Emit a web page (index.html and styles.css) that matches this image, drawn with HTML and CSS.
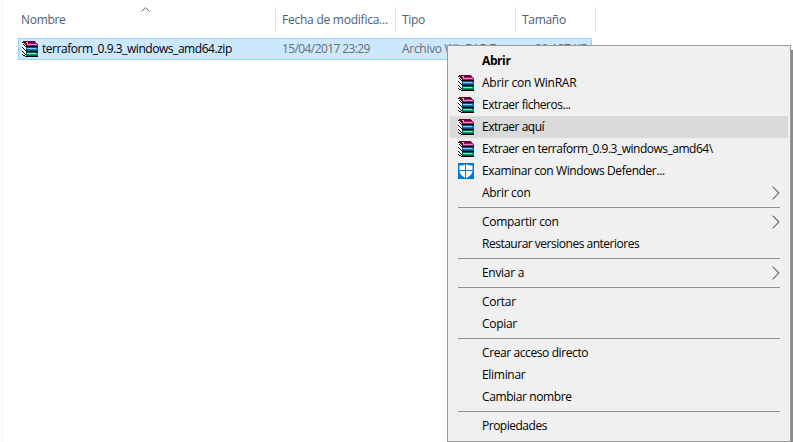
FILE: index.html
```html
<!DOCTYPE html>
<html lang="es">
<head>
<meta charset="utf-8">
<title>Explorador</title>
<link rel="stylesheet" href="styles.css">
</head>
<body>
<svg class="defs" width="0" height="0" aria-hidden="true">
  <symbol id="books" viewBox="0 0 16 16" shape-rendering="crispEdges">
    <path fill="#fff" d="M0 1h2l3 4v11H4l-4-3z"/>
    <path fill="#000" d="M0 1h1v1H0zM1 3h1v1H1zM2 4h1v1H2zM3 5h1v1H3zM0 6h1v1H0zM1 7h1v1H1zM2 8h1v1H2zM3 9h1v1H3zM0 10h1v1H0zM1 11h1v1H1zM0 13h1v1H0zM2 12h1v1H2zM3 13h1v1H3zM1 14h2v1H1zM3 15h13v1H3zM4 5h12v1H4zM4 10h12v1H4z"/>
    <path fill="#6a003e" d="M1 0h12v1h1v1h1v1h1v2H4V4H3V3H2V2H1z"/>
    <path fill="#b0106a" d="M6 2h8v1H6zM5 4h11v1H5z"/>
    <path fill="#ee8fc4" d="M5 3h10v1H5z"/>
    <path fill="#d7c431" d="M4 1h2v1H4zM5 2h1v1H5z"/>
    <path fill="#004f93" d="M4 6h12v4H4z"/>
    <path fill="#0a78d0" d="M5 7h11v2H5z"/>
    <path fill="#8fd0fa" d="M5 7h9v1H5z"/>
    <path fill="#006048" d="M4 11h12v4H4z"/>
    <path fill="#00a078" d="M5 12h11v2H5z"/>
    <path fill="#80e8c8" d="M5 12h9v1H5z"/>
  </symbol>
  <symbol id="shield" viewBox="0 0 16 16">
    <path fill="#0078d7" d="M0 0h16v16H0z"/>
    <path fill="#fff" d="M8 1C6.400 2 4.200 2.500 1.500 2.500v5C1.500 11.200 4.300 13.500 8 15.200c3.700-1.700 6.500-4 6.500-7.700v-5C11.800 2.500 9.600 2 8 1z"/>
    <path fill="#0078d7" d="M7 0h1v16H7zM1 7h14v1H1z"/>
  </symbol>
  <symbol id="arrow" viewBox="0 0 8 14">
    <path fill="none" stroke="#6fb4ea" d="M1.300.700 7.400 7l-6.100 6.300"/>
    <path fill="none" stroke="#7a3f08" d="M.6.700 6.600 7l-6 6.300"/>
  </symbol>
</svg>

<main class="explorer">
  <div class="head">
    <div class="col name"><span>Nombre</span>
      <svg class="sort" width="9" height="5" viewBox="0 0 9 5"><path d="M.5 4.500l4-4 4 4" fill="none" stroke="#6b6b6b"/></svg>
    </div>
    <div class="col date"><span class="loose">Fecha de modifica...</span></div>
    <div class="col type"><span>Tipo</span></div>
    <div class="col size"><span>Tamaño</span></div>
  </div>
  <div class="file">
    <div class="file-name"><svg width="16" height="16"><use href="#books"/></svg><span class="snug">terraform_0.9.3_windows_amd64.zip</span></div>
    <div class="file-date">15/04/2017 23:29</div>
    <div class="file-type">Archivo WinRAR Z...</div>
    <div class="file-size">20.187 KB</div>
  </div>
</main>

<nav class="menu">
  <div class="item bold"><i></i><span class="snug">Abrir</span></div>
  <div class="item"><i><svg width="16" height="16"><use href="#books"/></svg></i><span class="loose">Abrir con WinRAR</span></div>
  <div class="item"><i><svg width="16" height="16"><use href="#books"/></svg></i><span class="tight">Extraer ficheros...</span></div>
  <div class="item active"><i><svg width="16" height="16"><use href="#books"/></svg></i><span class="tight">Extraer aquí</span></div>
  <div class="item"><i><svg width="16" height="16"><use href="#books"/></svg></i><span class="tight">Extraer en terraform_0.9.3_windows_amd64\</span></div>
  <div class="item"><i><svg width="16" height="16"><use href="#shield"/></svg></i><span class="snug">Examinar con Windows Defender...</span></div>
  <div class="item"><i></i><span>Abrir con</span><svg class="arrow" width="8" height="14"><use href="#arrow"/></svg></div>
  <hr>
  <div class="item"><i></i><span>Compartir con</span><svg class="arrow" width="8" height="14"><use href="#arrow"/></svg></div>
  <div class="item"><i></i><span class="tight">Restaurar versiones anteriores</span></div>
  <hr>
  <div class="item"><i></i><span>Enviar a</span><svg class="arrow" width="8" height="14"><use href="#arrow"/></svg></div>
  <hr>
  <div class="item"><i></i><span>Cortar</span></div>
  <div class="item"><i></i><span>Copiar</span></div>
  <hr>
  <div class="item"><i></i><span class="snug">Crear acceso directo</span></div>
  <div class="item"><i></i><span>Eliminar</span></div>
  <div class="item"><i></i><span class="snug">Cambiar nombre</span></div>
  <hr>
  <div class="item"><i></i><span class="tight">Propiedades</span></div>
</nav>
</body>
</html>
```
FILE: styles.css
```css
* { box-sizing: border-box; }
body {
  margin: 0;
  width: 793px;
  height: 442px;
  overflow: hidden;
  position: relative;
  background: #fff;
  font: 12px/20px "Open Sans", "Noto Sans", sans-serif;
  letter-spacing: -0.3px;
  color: #000;
  white-space: nowrap;
}
svg { display: block; flex: none; }
.defs { position: absolute; }
.loose { letter-spacing: -0.24px; }
.snug { letter-spacing: -0.4px; }
.tight { letter-spacing: -0.49px; }
.file .snug { letter-spacing: -0.45px; }
.explorer {
  margin-left: 2px;
  padding-top: 7px;
  height: 442px;
  border-left: 1px solid #f5f5f5;
}
.head { display: flex; height: 25px; color: #4c607a; }
.col {
  position: relative;
  border-right: 1px solid #e2e2e2;
  padding: 3px 0 0 6px;
}
.name { width: 273px; padding-left: 18px; }
.date, .type { width: 120px; }
.size { width: 80px; }
.sort { position: absolute; left: 138px; top: 0; }
.file {
  display: flex;
  margin: 6px 0 0 15px;
  width: 574px;
  height: 22px;
  background: #cce8ff;
  border: 1px solid #99d1ff;
  color: #6d6d6d;
}
.file-name { display: flex; align-items: center; gap: 4px; width: 263px; padding-left: 3px; color: #000; }
.file-date { width: 120px; letter-spacing: -0.6px; }
.file-type { width: 120px; }
.file-size { width: 66px; text-align: right; }
.menu {
  position: absolute;
  left: 447px;
  top: 45px;
  width: 344px;
  height: 397px;
  padding: 4px 2px;
  background: #f0f0f0;
  border: 1px solid #9b9b9b;
  box-shadow: 2px 5px 1px #8b8b8b;
}
.item { display: flex; align-items: center; height: 22px; padding: 0 8px; }
.item i { width: 24px; flex: none; }
.item span { flex: 1; }
.bold { font-weight: 700; }
.active { background: #dadada; }
hr { margin: 3px 8px; height: 1px; border: 0; background: #919191; }
```
